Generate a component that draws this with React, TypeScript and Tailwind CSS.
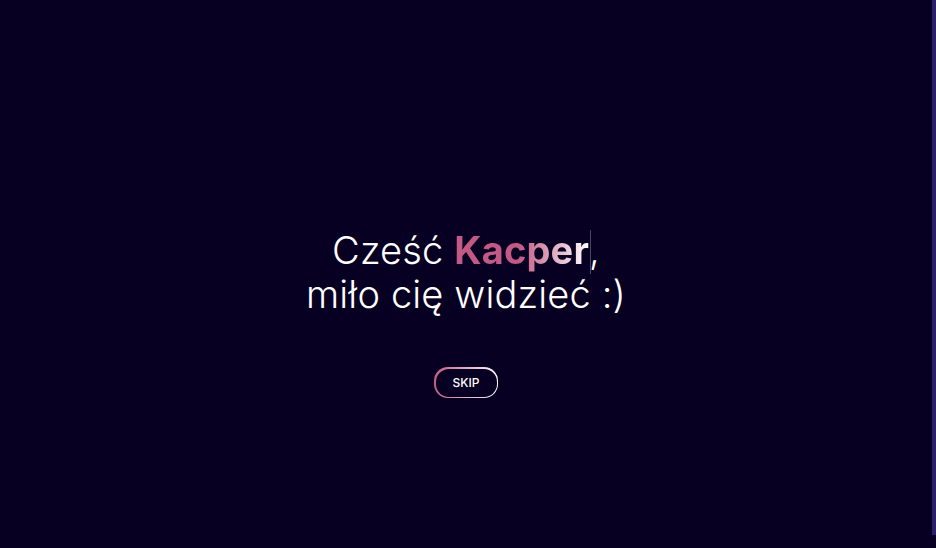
export default function App() {
  return (
    <div
      className="flex h-[548px] w-full overflow-hidden bg-[#070022] text-white"
      style={{ fontFamily: "Inter, 'Noto Sans', sans-serif" }}
    >
      <main className="flex flex-1 flex-col items-center pt-[228px]">
        <h1 className="text-center text-[38px] font-light leading-[44px] tracking-[0.004em]">
          Cześć{" "}
          <span className="bg-[linear-gradient(90deg,#c25a85_0%,#c25a85_48%,#ffffff_100%)] bg-clip-text font-bold text-transparent">
            Kacper
          </span>
          <span className="relative inline-block w-0">
            <span className="absolute left-[1px] top-[-34px] h-[44px] w-[1px] bg-[#4a4560]" />
          </span>
          ,
          <br />
          miło cię widzieć :)
        </h1>
        <button className="mt-[51px] rounded-[14px] bg-[linear-gradient(90deg,#c25a85,#ffffff)] p-[1.5px]">
          <span className="flex h-[28px] w-[61px] items-center justify-center rounded-[13px] bg-[#070022] text-[12px] font-medium">
            SKIP
          </span>
        </button>
      </main>
      <div className="w-[4px] pb-[13px]">
        <div className="h-full bg-[#2b1e6a]" />
      </div>
    </div>
  );
}
